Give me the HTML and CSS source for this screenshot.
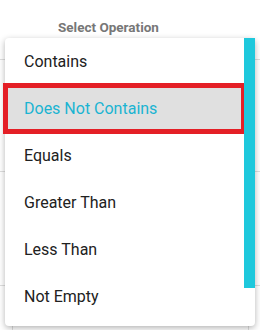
FILE: index.html
```html
<!DOCTYPE html>
<html lang="en">

<head>
    <meta charset="UTF-8">
    <meta name="viewport" content="width=device-width, initial-scale=1.0">
    <title>Select Operation</title>

    <link rel="stylesheet" href="styles.css">
</head>

<body>
    <div class="table">
        <div class="head">Select Operation</div>
        <div class="row tall"></div>
        <div class="row taller"></div>
        <div class="row last"><div class="cell"></div></div>
    </div>

    <div class="menu">
        <ul class="options">
            <li>Contains</li>
            <li class="selected">Does Not Contains</li>
            <li>Equals</li>
            <li>Greater Than</li>
            <li>Less Than</li>
            <li>Not Empty</li>
        </ul>
        <div class="track">
            <div class="thumb"></div>
        </div>
    </div>
</body>

</html>
```

FILE: styles.css
```css
body {
    margin: 0;
    width: 260px;
    height: 330px;
    overflow: hidden;
    background: #fff;
    font-family: Roboto, "Noto Sans", sans-serif;
    position: relative;
}

.table {
    width: 260px;
}

.head {
    height: 60px;
    box-sizing: border-box;
    padding: 19px 0 0 58px;
    font-size: 13.5px;
    font-weight: bold;
    color: #777;
    border-bottom: 1px solid #dedede;
}

.row {
    border-bottom: 1px solid #dedede;
}

.row.tall {
    height: 111px;
}

.row.taller {
    height: 113px;
}

.row.last {
    height: 60px;
    border-bottom: none;
    padding: 0 11px 0 12px;
}

.cell {
    height: 100%;
    border-left: 1px solid #dedede;
    border-right: 1px solid #dedede;
}

.menu {
    position: absolute;
    left: 5px;
    top: 38px;
    width: 250px;
    height: 288px;
    display: flex;
    background: #fff;
    border-radius: 4px;
    box-shadow: 0 2px 6px rgba(0, 0, 0, 0.3);
}

.options {
    flex: 1;
    list-style: none;
    margin: 0;
    padding: 0;
}

.options li {
    height: 47px;
    line-height: 47px;
    padding-left: 19px;
    font-size: 16px;
    color: #212121;
}

.options li.selected {
    background: #e0e0e0;
    color: #1ab4d2;
    outline: 5px solid #e41f26;
    outline-offset: -3px;
}

.track {
    width: 11px;
}

.thumb {
    height: 250px;
    background: #1ec8dc;
}
```
